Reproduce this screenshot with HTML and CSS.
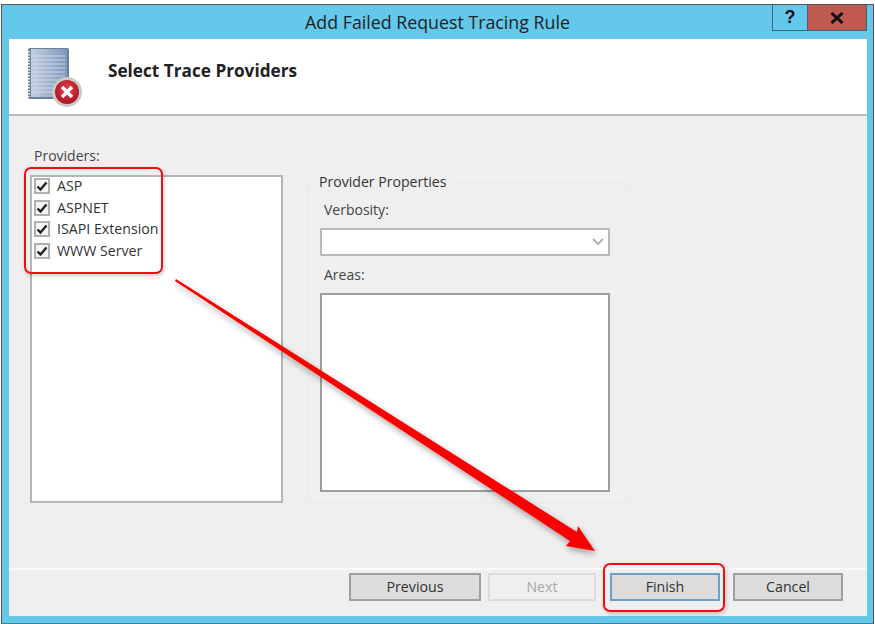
FILE: index.html
```html
<!DOCTYPE html>
<html lang="en">
<head>
    <meta charset="UTF-8">
    <meta name="viewport" content="width=device-width, initial-scale=1.0">
    <title>Add Failed Request Tracing Rule</title>
    <link rel="stylesheet" href="styles.css">
</head>
<body>

    <div class="window">
        <div class="titlebar">
            <div class="title">Add Failed Request Tracing Rule</div>
            <div class="caption-btns">
                <div class="help-btn">?</div>
                <div class="close-btn">
                    <svg width="14" height="12" viewBox="0 0 14 12"><path d="M1.5 1 L12.5 11 M12.5 1 L1.5 11" stroke="#111" stroke-width="3" fill="none"/></svg>
                </div>
            </div>
        </div>

        <div class="client">
            <div class="head">
                <svg class="head-icon" width="56" height="62" viewBox="0 0 56 62">
                    <defs>
                        <linearGradient id="book" x1="0" y1="0" x2="1" y2="0">
                            <stop offset="0" stop-color="#c3cfdf"/>
                            <stop offset="1" stop-color="#7f97bb"/>
                        </linearGradient>
                        <radialGradient id="err" cx="0.5" cy="0.4" r="0.6">
                            <stop offset="0" stop-color="#e8414b"/>
                            <stop offset="1" stop-color="#a9151f"/>
                        </radialGradient>
                    </defs>
                    <rect x="1" y="1" width="41" height="51" rx="2" fill="#6e7f99"/>
                    <rect x="4" y="2" width="36" height="48" fill="url(#book)"/>
                    <path d="M6 9H38M6 13H38M6 17H38M6 21H38M6 25H38M6 29H38M6 33H38M6 37H38M6 41H38M6 45H38" stroke="#dfe7f1" stroke-width="1" opacity="0.7"/>
                    <path d="M2 4V50" stroke="#e2e6ec" stroke-width="2" stroke-dasharray="1.5 1.5"/>
                    <circle cx="40" cy="45" r="15" fill="#c9c9c9"/>
                    <circle cx="40" cy="45" r="12" fill="url(#err)"/>
                    <path d="M35 40 L45 50 M45 40 L35 50" stroke="#fff" stroke-width="3.4" fill="none"/>
                </svg>
                <h1 class="head-title">Select Trace Providers</h1>
            </div>

            <div class="body">
                <div class="providers">
                    <div class="field-label providers-label">Providers:</div>
                    <div class="provider-list">
                        <div class="provider"><span class="check"><svg width="12" height="12" viewBox="0 0 12 12"><path d="M1.5 6.5 L4.5 9.5 L10.5 2.5" stroke="#222" stroke-width="2.4" fill="none"/></svg></span>ASP</div>
                        <div class="provider"><span class="check"><svg width="12" height="12" viewBox="0 0 12 12"><path d="M1.5 6.5 L4.5 9.5 L10.5 2.5" stroke="#222" stroke-width="2.4" fill="none"/></svg></span>ASPNET</div>
                        <div class="provider"><span class="check"><svg width="12" height="12" viewBox="0 0 12 12"><path d="M1.5 6.5 L4.5 9.5 L10.5 2.5" stroke="#222" stroke-width="2.4" fill="none"/></svg></span>ISAPI Extension</div>
                        <div class="provider"><span class="check"><svg width="12" height="12" viewBox="0 0 12 12"><path d="M1.5 6.5 L4.5 9.5 L10.5 2.5" stroke="#222" stroke-width="2.4" fill="none"/></svg></span>WWW Server</div>
                    </div>
                </div>

                <div class="props">
                    <div class="props-legend">Provider Properties</div>
                    <div class="field-label verbosity-label">Verbosity:</div>
                    <div class="combo">
                        <svg width="12" height="8" viewBox="0 0 12 8"><path d="M1 1 L6 6 L11 1" stroke="#b4b4b4" stroke-width="2" fill="none"/></svg>
                    </div>
                    <div class="field-label areas-label">Areas:</div>
                    <div class="areas"></div>
                </div>
            </div>

            <div class="footer">
                <div class="btn">Previous</div>
                <div class="btn btn-off">Next</div>
                <div class="btn btn-default">Finish</div>
                <div class="btn btn-cancel">Cancel</div>
            </div>
        </div>
    </div>

    <!-- red annotations on top of the dialog -->
    <div class="mark mark-list"></div>
    <div class="mark mark-finish"></div>
    <svg class="arrow" width="875" height="624" viewBox="0 0 875 624">
        <defs>
            <filter id="shadow" x="-10%" y="-10%" width="120%" height="120%">
                <feDropShadow dx="1" dy="3" stdDeviation="3" flood-color="#000" flood-opacity="0.35"/>
            </filter>
        </defs>
        <polygon points="176,279 577,532 578,526 595,551 566,546 570,541 175,281" fill="#fb0000" filter="url(#shadow)"/>
    </svg>

</body>
</html>
```
FILE: styles.css
```css
body {
    margin: 0;
    width: 875px;
    height: 624px;
    overflow: hidden;
    background: #fff;
    font-family: "Open Sans", "Liberation Sans", sans-serif;
    font-size: 14px;
    color: #333;
    position: relative;
}
.window {
    box-sizing: border-box;
    width: 873px;
    height: 620px;
    margin: 4px 0 0 1px;
    background: #63c8ea;
    border: 1px solid #555;
    border-bottom-color: #3d7f96;
    padding: 0 6px 7px 7px;
    display: flex;
    flex-direction: column;
}
.titlebar {
    height: 34px;
    display: flex;
    flex-shrink: 0;
}
.title {
    flex: 1;
    text-align: center;
    font-size: 17.8px;
    line-height: 35px;
    color: #222;
    padding-left: 94px;
}
.caption-btns {
    display: flex;
    height: 26px;
}
.help-btn {
    box-sizing: border-box;
    width: 35px;
    height: 26px;
    border: 1px solid #3d6476;
    border-top: 0;
    border-right: 0;
    font: bold 18px "Liberation Sans", sans-serif;
    text-align: center;
    line-height: 24px;
    color: #111;
}
.close-btn {
    box-sizing: border-box;
    width: 60px;
    height: 26px;
    background: #c0594f;
    border: 1px solid #3d6476;
    border-top: 0;
    display: flex;
    align-items: center;
    justify-content: center;
}
.client {
    flex: 1;
    background: #efefef;
    display: flex;
    flex-direction: column;
    min-height: 0;
}
.head {
    height: 75px;
    background: #fff;
    border-bottom: 2px solid #bdbdbd;
    display: flex;
    flex-shrink: 0;
}
.head-icon {
    margin: 8px 0 0 18px;
}
.head-title {
    margin: 21px 0 0 25px;
    font-size: 17.2px;
    line-height: 22px;
    font-weight: 700;
    color: #222;
}
.body {
    flex: 1;
    display: flex;
    padding: 30px 0 0 21px;
}
.field-label {
    font-size: 14px;
    line-height: 20px;
    color: #444;
}
.providers {
    width: 253px;
}
.providers-label {
    margin: 0 0 9px 4px;
}
.provider-list {
    box-sizing: border-box;
    width: 253px;
    height: 328px;
    background: #fff;
    border: 2px solid #b2b5b9;
    padding-left: 2px;
}
.provider {
    box-sizing: border-box;
    display: flex;
    align-items: flex-start;
    height: 21.6px;
    padding-top: 1px;
    font-size: 14.2px;
    line-height: 16px;
    color: #333;
}
.check {
    box-sizing: border-box;
    width: 16px;
    height: 16px;
    margin-right: 7px;
    border: 2px solid #b0b0b0;
    background: #f4f4f4;
    display: flex;
}
.props {
    box-sizing: border-box;
    width: 324px;
    height: 322px;
    margin: 36px 0 0 24px;
    border: 2px solid #e8edf0;
    border-radius: 4px;
    padding: 16px 0 0 12px;
    position: relative;
}
.props-legend {
    position: absolute;
    top: -12px;
    left: 8px;
    padding: 0 4px 0 2px;
    background: #efefef;
    font-size: 14.1px;
    line-height: 20px;
    color: #333;
}
.verbosity-label {
    margin-left: 3px;
}
.combo {
    box-sizing: border-box;
    width: 290px;
    height: 28px;
    margin-top: 8px;
    margin-left: -1px;
    background: #fff;
    border: 2px solid #b9b9b9;
    display: flex;
    align-items: center;
    justify-content: flex-end;
    padding-right: 4px;
}
.areas-label {
    margin-top: 9px;
    margin-left: 3px;
}
.areas {
    box-sizing: border-box;
    width: 290px;
    height: 199px;
    margin-top: 8px;
    margin-left: -1px;
    background: #fff;
    border: 2px solid #9e9e9e;
}
.footer {
    height: 43px;
    flex-shrink: 0;
    border-top: 2px solid #f9f9f9;
    display: flex;
    align-items: flex-start;
    padding: 3px 0 0 340px;
}
.btn {
    box-sizing: border-box;
    width: 132px;
    height: 28px;
    margin-right: 7px;
    background: #dcdcdc;
    border: 2px solid #a0a0a0;
    font-size: 14.2px;
    line-height: 24px;
    text-align: center;
    color: #333;
}
.btn-off {
    width: 108px;
    margin-right: 14px;
    background: #f0f0f0;
    border-color: #dcdcdc;
    color: #a8a8a8;
}
.btn-default {
    width: 110px;
    margin-right: 13px;
    border-color: #6f9ec7;
}
.btn-cancel {
    width: 110px;
    margin-right: 0;
}
.mark {
    position: absolute;
    box-sizing: border-box;
    border: 2px solid #f30d12;
    border-radius: 7px;
    box-shadow: 1px 2px 4px rgba(0, 0, 0, 0.2);
}
.mark-list {
    left: 24px;
    top: 167px;
    width: 139px;
    height: 107px;
}
.mark-finish {
    left: 603px;
    top: 563px;
    width: 122px;
    height: 49px;
}
.arrow {
    position: absolute;
    left: 0;
    top: 0;
    pointer-events: none;
}
```
